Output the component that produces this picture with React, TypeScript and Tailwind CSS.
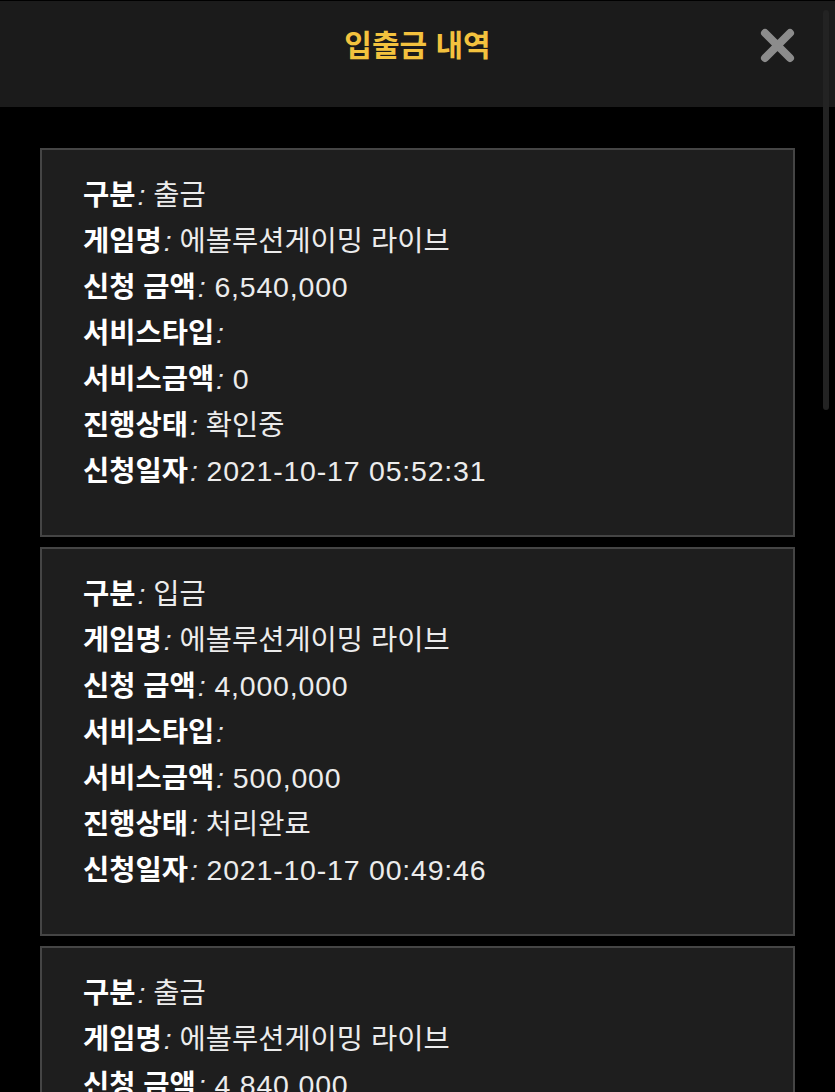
import React from 'react';

interface HistoryItem {
  kind: string;
  game: string;
  amount: string;
  serviceType: string;
  serviceAmount: string;
  status: string;
  date: string;
}

const items: HistoryItem[] = [
  {
    kind: '출금',
    game: '에볼루션게이밍 라이브',
    amount: '6,540,000',
    serviceType: '',
    serviceAmount: '0',
    status: '확인중',
    date: '2021-10-17 05:52:31',
  },
  {
    kind: '입금',
    game: '에볼루션게이밍 라이브',
    amount: '4,000,000',
    serviceType: '',
    serviceAmount: '500,000',
    status: '처리완료',
    date: '2021-10-17 00:49:46',
  },
  {
    kind: '출금',
    game: '에볼루션게이밍 라이브',
    amount: '4,840,000',
    serviceType: '',
    serviceAmount: '0',
    status: '처리완료',
    date: '2021-10-16 22:10:05',
  },
];

function Row({ label, value }: { label: string; value: string }) {
  const numeric = /^[\d,:\- ]+$/.test(value);
  return (
    <div className="h-[46px] leading-[46px] whitespace-nowrap">
      <span className="font-bold text-white">{label}</span>
      <span className="ml-[2px] italic text-[#e8e8e8]">:</span>
      <span className={numeric ? 'tracking-[0.8px] text-[#ececec]' : 'text-[#ececec]'}> {value}</span>
    </div>
  );
}

export default function App() {
  return (
    <div
      className="relative min-h-[1092px] overflow-hidden bg-black"
      style={{ fontFamily: '"Liberation Sans", "Noto Sans CJK KR", sans-serif' }}
    >
      <header className="relative flex h-[107px] items-center justify-center border-t border-black bg-[#1b1b1b]">
        <h1 className="-mt-[18px] text-[30px] font-bold text-[#f3c23e]">입출금 내역</h1>
        <button className="absolute right-[40px] top-[27px] h-[35px] w-[35px]" aria-label="닫기">
          <svg viewBox="0 0 35 35" className="h-full w-full">
            <path
              d="M5 5 L30 30 M30 5 L5 30"
              stroke="#8c8c8c"
              strokeWidth="8"
              strokeLinecap="round"
              fill="none"
            />
          </svg>
        </button>
      </header>

      <div className="flex flex-col gap-[10px] px-10 pt-[41px]">
        {items.map((item, i) => (
          <div
            key={i}
            className="border-2 border-[#454545] bg-[#1e1e1e] px-[41px] pt-[22px] pb-[41px] text-[28.5px]"
          >
            <Row label="구분" value={item.kind} />
            <Row label="게임명" value={item.game} />
            <Row label="신청 금액" value={item.amount} />
            <Row label="서비스타입" value={item.serviceType} />
            <Row label="서비스금액" value={item.serviceAmount} />
            <Row label="진행상태" value={item.status} />
            <Row label="신청일자" value={item.date} />
          </div>
        ))}
      </div>

      <div className="absolute right-[6px] top-[10px] h-[400px] w-[6px] rounded-full bg-[#232323]" />
    </div>
  );
}
